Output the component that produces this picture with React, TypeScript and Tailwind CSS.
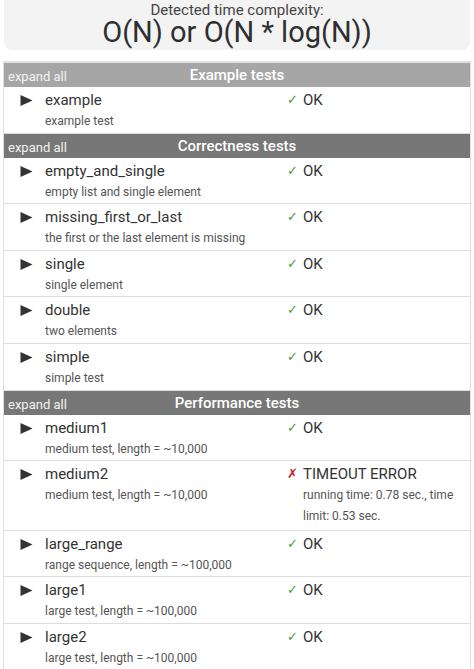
import { Fragment } from 'react';

type TestRow = {
  name: string;
  desc: string;
  ok: boolean;
  status: string;
  detail?: string;
};

type TestGroup = {
  title: string;
  light?: boolean;
  rows: TestRow[];
};

const groups: TestGroup[] = [
  {
    title: 'Example tests',
    light: true,
    rows: [{ name: 'example', desc: 'example test', ok: true, status: 'OK' }],
  },
  {
    title: 'Correctness tests',
    rows: [
      { name: 'empty_and_single', desc: 'empty list and single element', ok: true, status: 'OK' },
      { name: 'missing_first_or_last', desc: 'the first or the last element is missing', ok: true, status: 'OK' },
      { name: 'single', desc: 'single element', ok: true, status: 'OK' },
      { name: 'double', desc: 'two elements', ok: true, status: 'OK' },
      { name: 'simple', desc: 'simple test', ok: true, status: 'OK' },
    ],
  },
  {
    title: 'Performance tests',
    rows: [
      { name: 'medium1', desc: 'medium test, length = ~10,000', ok: true, status: 'OK' },
      {
        name: 'medium2',
        desc: 'medium test, length = ~10,000',
        ok: false,
        status: 'TIMEOUT ERROR',
        detail: 'running time: 0.78 sec., time limit: 0.53 sec.',
      },
      { name: 'large_range', desc: 'range sequence, length = ~100,000', ok: true, status: 'OK' },
      { name: 'large1', desc: 'large test, length = ~100,000', ok: true, status: 'OK' },
      { name: 'large2', desc: 'large test, length = ~100,000', ok: true, status: 'OK' },
    ],
  },
];

const Arrow = () => (
  <svg width="13" height="11" viewBox="0 0 13 11" className="mt-[6px]">
    <path d="M0.5 0 L12.5 5.5 L0.5 11 Z" fill="#333333" />
  </svg>
);

const Row = ({ row }: { row: TestRow }) => (
  <div className="grid grid-cols-[41px_242px_1fr] border-b border-[#dddddd] bg-white pt-[2px] pb-[0.6px]">
    <div className="flex justify-start pl-[16px]">
      <Arrow />
    </div>
    <div className="flex flex-col">
      <span className="text-[15px] leading-[22px] text-[#333333]">{row.name}</span>
      <span className="text-[12px] leading-[21px] text-[#555555]">{row.desc}</span>
    </div>
    <div className="flex pr-[4px]">
      <span
        className={
          row.ok
            ? 'w-[16px] shrink-0 text-[13px] leading-[22px] text-[#3f9c3f]'
            : 'w-[16px] shrink-0 text-[13px] leading-[22px] text-[#c21d2b]'
        }
      >
        {row.ok ? '✓' : '✗'}
      </span>
      <div className="flex flex-col">
        <span className="text-[15px] leading-[22px] text-[#333333]">{row.status}</span>
        {row.detail && <span className="pb-[2px] text-[12px] leading-[21px] text-[#555555]">{row.detail}</span>}
      </div>
    </div>
  </div>
);

const Header = ({ group }: { group: TestGroup }) => (
  <div
    className={
      group.light
        ? 'relative flex h-[24px] items-center justify-center bg-[#a6a6a6]'
        : 'relative flex h-[24px] items-center justify-center bg-[#777777]'
    }
  >
    <span className="absolute left-[4px] top-[5px] text-[13px] leading-[18px] text-[#f2f2f2]">expand all</span>
    <span className="text-[15px] font-medium leading-[24px] text-white">{group.title}</span>
  </div>
);

export default function App() {
  return (
    <div className="h-[669px] w-[474px] overflow-hidden bg-white font-['Roboto',sans-serif]">
      <div className="mx-[4px] flex h-[50px] flex-col items-center rounded-b-[8px] bg-[#f3f3f3]">
        <span className="text-[15px] leading-[20px] text-[#444444]">Detected time complexity:</span>
        <span className="text-[29px] leading-[24px] text-[#2f2f2f]">O(N) or O(N * log(N))</span>
      </div>
      <div className="mx-[3px] mt-[11px] border-x border-t-2 border-[#e0e0e0]">
        {groups.map((group) => (
          <Fragment key={group.title}>
            <Header group={group} />
            {group.rows.map((row) => (
              <Row key={row.name} row={row} />
            ))}
          </Fragment>
        ))}
      </div>
    </div>
  );
}
